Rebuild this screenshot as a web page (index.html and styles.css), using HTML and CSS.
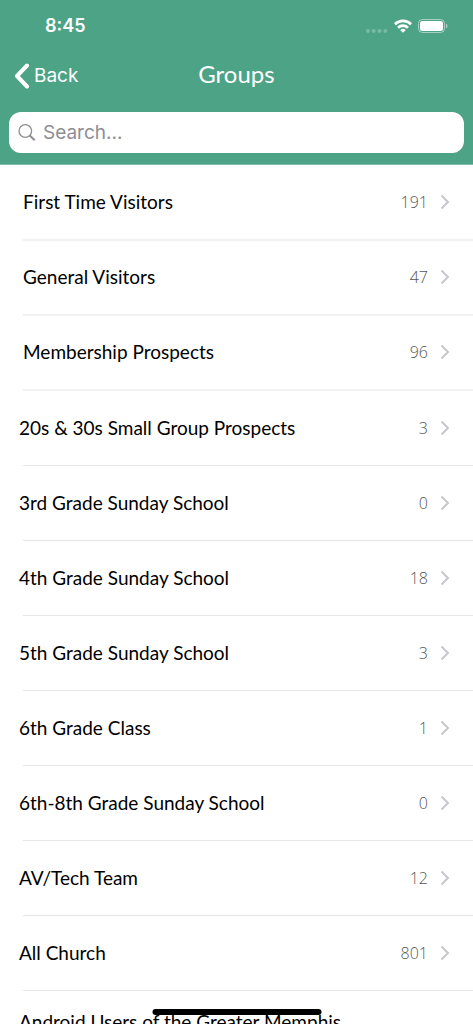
FILE: index.html
```html
<!DOCTYPE html>
<html lang="en">
<head>
<meta charset="utf-8">
<meta name="viewport" content="width=device-width, initial-scale=1">
<title>Groups</title>
<link rel="stylesheet" href="styles.css">
</head>
<body>
<svg class="symbols" aria-hidden="true">
  <symbol id="chevron" viewBox="0 0 10 16"><path d="M1.500 1.500 8 8l-6.500 6.500" fill="none" stroke="currentColor" stroke-width="2"/></symbol>
</svg>
<div class="app">
  <header class="header">
    <div class="status">
      <span class="time">8:45</span>
      <span class="indicators">
        <svg class="signal" viewBox="0 0 22 4" aria-hidden="true"><circle cx="2" cy="2" r="2"/><circle cx="7.700" cy="2" r="2"/><circle cx="13.500" cy="2" r="2"/><circle cx="19.300" cy="2" r="2"/></svg>
        <svg class="wifi" viewBox="0 0 18 14" aria-hidden="true"><g fill="none" stroke="currentColor" stroke-width="2.700"><path d="M.9 5.200a11.700 11.700 0 0 1 16.200 0"/><path d="M4 8.700a7.300 7.300 0 0 1 10 0"/></g><path d="M9 13.800 6.200 11.200a4 4 0 0 1 5.600 0z" fill="currentColor"/></svg>
        <svg class="battery" viewBox="0 0 30 14" aria-hidden="true"><rect x=".5" y=".5" width="26" height="13" rx="4" fill="none" stroke="#fff" stroke-opacity=".5"/><rect x="2" y="2" width="23" height="10" rx="2.500" fill="#fff"/><path d="M28 4.700v4.600q1.500-.7 1.500-2.300T28 4.700" fill="#fff" fill-opacity=".55"/></svg>
      </span>
    </div>
    <nav class="navbar">
      <button class="back" type="button"><svg viewBox="0 0 16 26" aria-hidden="true"><path d="M13 2.500 3 13l10 10.500" fill="none" stroke="currentColor" stroke-width="4" stroke-linecap="round" stroke-linejoin="round"/></svg>Back</button>
      <h1 class="title">Groups</h1>
    </nav>
    <label class="search">
      <svg viewBox="0 0 18 18" aria-hidden="true"><g fill="none" stroke="currentColor"><circle cx="7.300" cy="7" r="6.300" stroke-width="1.300"/><path d="m11.700 11.500 5 4.800" stroke-width="2"/></g></svg>
      <input type="search" placeholder="Search..." aria-label="Search groups">
    </label>
  </header>
  <main class="list-area">
    <ul class="groups pinned">
      <li class="row"><a class="group" href="#"><span class="name">First Time Visitors</span><span class="count">191</span><svg class="chevron"><use href="#chevron"/></svg></a></li>
      <li class="row"><a class="group" href="#"><span class="name">General Visitors</span><span class="count">47</span><svg class="chevron"><use href="#chevron"/></svg></a></li>
      <li class="row"><a class="group" href="#"><span class="name">Membership Prospects</span><span class="count">96</span><svg class="chevron"><use href="#chevron"/></svg></a></li>
    </ul>
    <ul class="groups">
      <li class="row"><a class="group" href="#"><span class="name">20s &amp; 30s Small Group Prospects</span><span class="count">3</span><svg class="chevron"><use href="#chevron"/></svg></a></li>
      <li class="row"><a class="group" href="#"><span class="name">3rd Grade Sunday School</span><span class="count">0</span><svg class="chevron"><use href="#chevron"/></svg></a></li>
      <li class="row"><a class="group" href="#"><span class="name">4th Grade Sunday School</span><span class="count">18</span><svg class="chevron"><use href="#chevron"/></svg></a></li>
      <li class="row"><a class="group" href="#"><span class="name">5th Grade Sunday School</span><span class="count">3</span><svg class="chevron"><use href="#chevron"/></svg></a></li>
      <li class="row"><a class="group" href="#"><span class="name">6th Grade Class</span><span class="count">1</span><svg class="chevron"><use href="#chevron"/></svg></a></li>
      <li class="row"><a class="group" href="#"><span class="name">6th-8th Grade Sunday School</span><span class="count">0</span><svg class="chevron"><use href="#chevron"/></svg></a></li>
      <li class="row"><a class="group" href="#"><span class="name">AV/Tech Team</span><span class="count">12</span><svg class="chevron"><use href="#chevron"/></svg></a></li>
      <li class="row"><a class="group" href="#"><span class="name">All Church</span><span class="count">801</span><svg class="chevron"><use href="#chevron"/></svg></a></li>
      <li class="row compact"><a class="group" href="#"><span class="name">Android Users of the Greater Memphis</span></a></li>
    </ul>
  </main>
  <div class="home-bar"></div>
</div>
</body>
</html>
```
FILE: styles.css
```css
* { box-sizing: border-box; }

body {
  margin: 0;
  background: #fff;
  color: #000;
  font-family: Lato, "Open Sans", sans-serif;
}

.symbols { position: absolute; width: 0; height: 0; }

.app {
  display: flex;
  flex-direction: column;
  height: 100vh;
}

.header {
  flex: none;
  padding: 12px 9px 11px;
  background: #4ca386;
  border-bottom: 1px solid #7fbda8;
  color: #fff;
}

.status {
  display: flex;
  align-items: center;
  justify-content: space-between;
  height: 28px;
  padding: 0 16px 0 36px;
}

.time { font: 600 18px/28px Inter, sans-serif; }

.indicators { display: flex; align-items: center; gap: 6px; }
.indicators svg { display: block; }
.signal { width: 22px; height: 4px; margin-top: 10px; fill: #fff; fill-opacity: .25; }
.wifi { width: 18px; height: 14px; }
.battery { width: 30px; height: 14px; }

.navbar {
  display: grid;
  grid-template-columns: 1fr auto 1fr;
  align-items: center;
  height: 72px;
}

.back {
  display: flex;
  align-items: center;
  justify-self: start;
  gap: 4px;
  padding: 0 0 0 5px;
  border: 0;
  background: none;
  color: inherit;
  font: 19px/28px Inter, sans-serif;
}

.back svg { width: 16px; height: 26px; }

.title {
  margin: 0;
  padding-bottom: 4px;
  font-size: 24px;
  line-height: 28px;
  font-weight: 400;
}

.search {
  display: flex;
  align-items: center;
  gap: 7px;
  height: 41px;
  padding: 0 9px;
  border-radius: 12px;
  background: #fff;
  color: #8e8e93;
}

.search svg { flex: none; width: 18px; height: 18px; }

.search input {
  flex: 1;
  min-width: 0;
  padding: 0;
  border: 0;
  outline: 0;
  background: none;
  color: #000;
  font: 19px/28px Inter, sans-serif;
  appearance: none;
}

.search input::placeholder { color: #8e8e93; opacity: 1; }

.list-area {
  flex: 1;
  min-height: 0;
  overflow-y: auto;
  scrollbar-width: none;
}

.groups { margin: 0; padding: 0; list-style: none; }
.groups.pinned { padding-bottom: 1px; }

.group {
  display: flex;
  align-items: center;
  height: 75px;
  padding: 0 23px 2px 19px;
  color: #000;
  text-decoration: none;
}

.pinned .group { padding-left: 23px; }
.compact .group { height: 64px; }

.row::after {
  content: "";
  display: block;
  height: 1px;
  margin: -1px 0 0 23px;
  background: #e6e6e7;
}

.pinned .row::after {
  height: 2px;
  margin-bottom: -1px;
  background: #f1f1f2;
}

.name { flex: 1; font-size: 19px; line-height: 24px; }
.count { color: #555; font: 300 16px/24px "Open Sans", sans-serif; }
.chevron { width: 10px; height: 16px; margin-left: 12px; color: #c7c7cc; }

.home-bar {
  position: fixed;
  bottom: 9px;
  left: 50%;
  width: 169px;
  height: 6px;
  border-radius: 3px;
  background: #000;
  transform: translateX(-50%);
}
```
